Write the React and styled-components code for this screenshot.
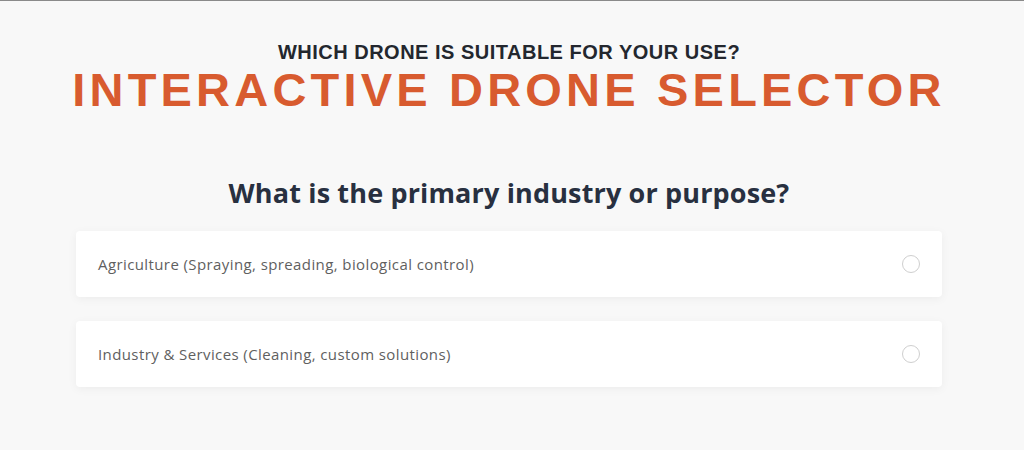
import React from 'react';
import styled, { createGlobalStyle } from 'styled-components';

const GlobalStyle = createGlobalStyle`
  html, body {
    margin: 0;
    padding: 0;
    background: #f8f8f8;
  }
  body {
    border-top: 1px solid #8a8a8a;
    font-family: "Open Sans", "Liberation Sans", sans-serif;
  }
`;

const options = [
  'Agriculture (Spraying, spreading, biological control)',
  'Industry & Services (Cleaning, custom solutions)',
];

const App = () => {
  return (
    <Wrapper>
      <GlobalStyle />
      <Page>
        <Header>
          <Kicker>Which drone is suitable for your use?</Kicker>
          <Title>Interactive Drone Selector</Title>
        </Header>
        <Question>What is the primary industry or purpose?</Question>
        <OptionList>
          {options.map((label) => (
            <Option key={label}>
              <span>{label}</span>
              <Radio />
            </Option>
          ))}
        </OptionList>
      </Page>
    </Wrapper>
  );
};

const Wrapper = styled.div`
  padding-right: 6px;
`;

const Page = styled.div`
  width: 866px;
  margin: 0 auto;
  padding: 40px 0 60px;
  display: flex;
  flex-direction: column;
  align-items: center;
`;

const Header = styled.div`
  display: flex;
  flex-direction: column;
  align-items: center;
  text-transform: uppercase;
`;

const Kicker = styled.h3`
  margin: 0;
  font-family: "Liberation Sans", Arial, sans-serif;
  font-weight: 700;
  font-size: 20px;
  line-height: 22px;
  letter-spacing: 0.5px;
  color: #23272e;
`;

const Title = styled.h1`
  margin: 1px 0 0;
  font-family: "Liberation Sans", Arial, sans-serif;
  font-weight: 700;
  font-size: 47px;
  line-height: 52px;
  letter-spacing: 4.2px;
  color: #d85b2f;
  white-space: nowrap;
`;

const Question = styled.h2`
  margin: 59px 0 0;
  font-family: "Open Sans", sans-serif;
  font-weight: 700;
  font-size: 27px;
  line-height: 36px;
  letter-spacing: 0.15px;
  color: #283040;
`;

const OptionList = styled.div`
  width: 100%;
  margin-top: 20px;
  display: flex;
  flex-direction: column;
  gap: 24px;
`;

const Option = styled.div`
  height: 66px;
  padding: 0 22px;
  box-sizing: border-box;
  display: flex;
  align-items: center;
  justify-content: space-between;
  background: #fff;
  border-radius: 4px;
  box-shadow: 0 2px 10px rgb(0 0 0 / 5%);
  span {
    font-family: "Open Sans", sans-serif;
    font-size: 15px;
    letter-spacing: 0.4px;
    color: #5f5f5f;
  }
`;

const Radio = styled.span`
  width: 16px;
  height: 16px;
  margin-right: 0;
  border: 1px solid #cfcfcf;
  border-radius: 50%;
`;

export default App;
